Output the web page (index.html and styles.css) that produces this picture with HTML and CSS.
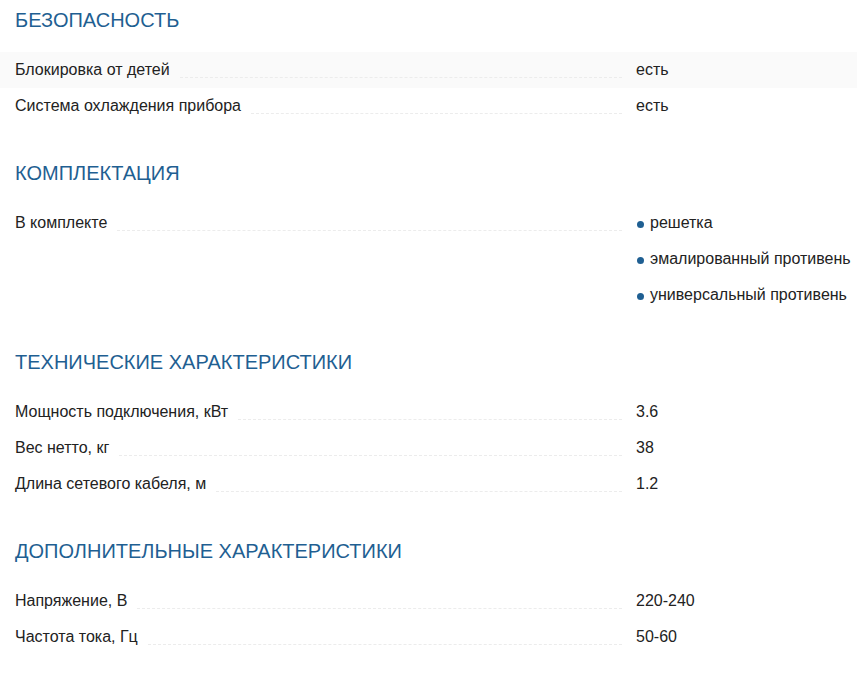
FILE: index.html
```html
<!DOCTYPE html>
<html lang="ru">
<head>
<meta charset="utf-8">
<title>Характеристики</title>
<link rel="stylesheet" href="styles.css">
</head>
<body>
<div class="specs">
  <section class="group">
    <h2 class="group-title">БЕЗОПАСНОСТЬ</h2>
    <div class="row row-hover">
      <div class="name"><span>Блокировка от детей</span><i class="dots"></i></div>
      <div class="value">есть</div>
    </div>
    <div class="row">
      <div class="name"><span>Система охлаждения прибора</span><i class="dots"></i></div>
      <div class="value">есть</div>
    </div>
  </section>
  <section class="group">
    <h2 class="group-title">КОМПЛЕКТАЦИЯ</h2>
    <div class="row">
      <div class="name"><span>В комплекте</span><i class="dots"></i></div>
      <ul class="value list">
        <li>решетка</li>
        <li>эмалированный противень</li>
        <li>универсальный противень</li>
      </ul>
    </div>
  </section>
  <section class="group">
    <h2 class="group-title">ТЕХНИЧЕСКИЕ ХАРАКТЕРИСТИКИ</h2>
    <div class="row">
      <div class="name"><span>Мощность подключения, кВт</span><i class="dots"></i></div>
      <div class="value">3.6</div>
    </div>
    <div class="row">
      <div class="name"><span>Вес нетто, кг</span><i class="dots"></i></div>
      <div class="value">38</div>
    </div>
    <div class="row">
      <div class="name"><span>Длина сетевого кабеля, м</span><i class="dots"></i></div>
      <div class="value">1.2</div>
    </div>
  </section>
  <section class="group">
    <h2 class="group-title">ДОПОЛНИТЕЛЬНЫЕ ХАРАКТЕРИСТИКИ</h2>
    <div class="row">
      <div class="name"><span>Напряжение, В</span><i class="dots"></i></div>
      <div class="value">220-240</div>
    </div>
    <div class="row">
      <div class="name"><span>Частота тока, Гц</span><i class="dots"></i></div>
      <div class="value">50-60</div>
    </div>
  </section>
</div>
</body>
</html>
```

FILE: styles.css
```css
html, body {
  margin: 0;
  padding: 0;
  background: #ffffff;
}
body {
  font-family: "Liberation Sans", Arial, sans-serif;
  color: #222222;
  font-size: 16px;
}
.specs {
  padding-top: 8px;
}
.group + .group {
  margin-top: 37px;
}
.group-title {
  margin: 0 0 20px;
  padding-left: 15px;
  font-size: 20px;
  line-height: 24px;
  font-weight: normal;
  color: #1f5f92;
}
.row {
  display: grid;
  grid-template-columns: 607px 1fr;
  column-gap: 14px;
  align-items: start;
  padding-left: 15px;
}
.row-hover {
  background: #fafafa;
}
.name {
  display: flex;
  align-items: flex-start;
  height: 36px;
  line-height: 36px;
}
.name span {
  white-space: nowrap;
}
.dots {
  flex: 1;
  margin-left: 10px;
  height: 25px;
  border-bottom: 1px dashed #ececec;
}
.value {
  line-height: 36px;
}
.list {
  margin: 0;
  padding: 0;
  list-style: none;
}
.list li {
  position: relative;
  padding-left: 14px;
  height: 36px;
}
.list li::before {
  content: "";
  position: absolute;
  left: 1px;
  top: 16px;
  width: 7px;
  height: 7px;
  border-radius: 50%;
  background: #1f5f92;
}
```
